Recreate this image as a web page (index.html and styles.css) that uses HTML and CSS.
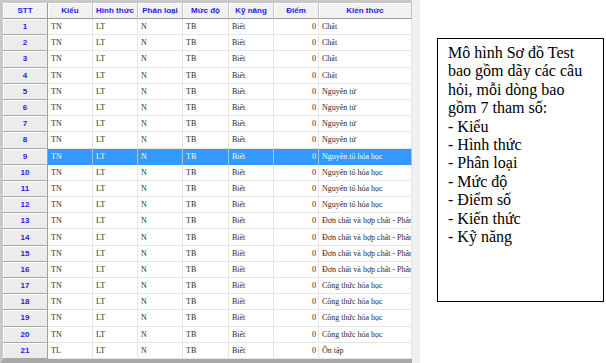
FILE: index.html
```html
<!DOCTYPE html>
<html lang="vi">
<head>
<meta charset="utf-8">
<title>Sơ đồ Test</title>
<link rel="stylesheet" href="styles.css">
</head>
<body>
<div class="page">
  <div class="grid-frame">
    <table class="grid">
      <colgroup>
        <col class="c-stt"><col class="c-n"><col class="c-n"><col class="c-n"><col class="c-md"><col class="c-n"><col class="c-n"><col class="c-kt">
      </colgroup>
      <thead>
        <tr>
          <th>STT</th><th>Kiểu</th><th>Hình thức</th><th>Phân loại</th><th>Mức độ</th><th>Kỹ năng</th><th>Điểm</th><th>Kiến thức</th>
        </tr>
      </thead>
      <tbody>
        <tr><th>1</th><td>TN</td><td>LT</td><td>N</td><td>TB</td><td>Biết</td><td class="num">0</td><td>Chất</td></tr>
        <tr><th>2</th><td>TN</td><td>LT</td><td>N</td><td>TB</td><td>Biết</td><td class="num">0</td><td>Chất</td></tr>
        <tr><th>3</th><td>TN</td><td>LT</td><td>N</td><td>TB</td><td>Biết</td><td class="num">0</td><td>Chất</td></tr>
        <tr><th>4</th><td>TN</td><td>LT</td><td>N</td><td>TB</td><td>Biết</td><td class="num">0</td><td>Chất</td></tr>
        <tr><th>5</th><td>TN</td><td>LT</td><td>N</td><td>TB</td><td>Biết</td><td class="num">0</td><td>Nguyên tử</td></tr>
        <tr><th>6</th><td>TN</td><td>LT</td><td>N</td><td>TB</td><td>Biết</td><td class="num">0</td><td>Nguyên tử</td></tr>
        <tr><th>7</th><td>TN</td><td>LT</td><td>N</td><td>TB</td><td>Biết</td><td class="num">0</td><td>Nguyên tử</td></tr>
        <tr><th>8</th><td>TN</td><td>LT</td><td>N</td><td>TB</td><td>Biết</td><td class="num">0</td><td>Nguyên tử</td></tr>
        <tr class="selected"><th>9</th><td>TN</td><td>LT</td><td class="focus">N</td><td>TB</td><td>Biết</td><td class="num">0</td><td>Nguyên tố hóa học</td></tr>
        <tr><th>10</th><td>TN</td><td>LT</td><td>N</td><td>TB</td><td>Biết</td><td class="num">0</td><td>Nguyên tố hóa học</td></tr>
        <tr><th>11</th><td>TN</td><td>LT</td><td>N</td><td>TB</td><td>Biết</td><td class="num">0</td><td>Nguyên tố hóa học</td></tr>
        <tr><th>12</th><td>TN</td><td>LT</td><td>N</td><td>TB</td><td>Biết</td><td class="num">0</td><td>Nguyên tố hóa học</td></tr>
        <tr><th>13</th><td>TN</td><td>LT</td><td>N</td><td>TB</td><td>Biết</td><td class="num">0</td><td>Đơn chất và hợp chất - Phân tử</td></tr>
        <tr><th>14</th><td>TN</td><td>LT</td><td>N</td><td>TB</td><td>Biết</td><td class="num">0</td><td>Đơn chất và hợp chất - Phân tử</td></tr>
        <tr><th>15</th><td>TN</td><td>LT</td><td>N</td><td>TB</td><td>Biết</td><td class="num">0</td><td>Đơn chất và hợp chất - Phân tử</td></tr>
        <tr><th>16</th><td>TN</td><td>LT</td><td>N</td><td>TB</td><td>Biết</td><td class="num">0</td><td>Đơn chất và hợp chất - Phân tử</td></tr>
        <tr><th>17</th><td>TN</td><td>LT</td><td>N</td><td>TB</td><td>Biết</td><td class="num">0</td><td>Công thức hóa học</td></tr>
        <tr><th>18</th><td>TN</td><td>LT</td><td>N</td><td>TB</td><td>Biết</td><td class="num">0</td><td>Công thức hóa học</td></tr>
        <tr><th>19</th><td>TN</td><td>LT</td><td>N</td><td>TB</td><td>Biết</td><td class="num">0</td><td>Công thức hóa học</td></tr>
        <tr><th>20</th><td>TN</td><td>LT</td><td>N</td><td>TB</td><td>Biết</td><td class="num">0</td><td>Công thức hóa học</td></tr>
        <tr><th>21</th><td>TL</td><td>LT</td><td>N</td><td>TB</td><td>Biết</td><td class="num">0</td><td>Ôn tập</td></tr>
      </tbody>
    </table>
  </div>
  <div class="strip"></div>
  <div class="note">
    Mô hình Sơ đồ Test<br>
    bao gồm dãy các câu<br>
    hỏi, mỗi dòng bao<br>
    gồm 7 tham số:<br>
    - Kiểu<br>
    - Hình thức<br>
    - Phân loại<br>
    - Mức độ<br>
    - Điểm số<br>
    - Kiến thức<br>
    - Kỹ năng
  </div>
</div>
</body>
</html>
```
FILE: styles.css
```css
* { box-sizing: border-box; }

html, body {
  margin: 0;
  padding: 0;
  background: #ffffff;
}

.page {
  display: flex;
  align-items: flex-start;
  width: 606px;
  height: 363px;
  overflow: hidden;
}

.grid-frame {
  width: 412px;
  height: 363px;
  flex: none;
  background: #ffffff;
  border-top: 3px solid #c8c8c8;
  border-left: 3px solid #c8c8c8;
  border-bottom: 4px solid #a8a8a8;
  box-shadow: inset 1px 1px 0 #9a9a9a;
  overflow: hidden;
}

.strip {
  width: 8px;
  height: 363px;
  flex: none;
  background: #f0f0f0;
}

.grid {
  table-layout: fixed;
  border-collapse: separate;
  border-spacing: 0;
  width: 409px;
}

.c-stt { width: 45px; }
.c-n { width: 45px; }
.c-md { width: 46px; }
.c-kt { width: 93px; }

.grid thead th {
  height: 16px;
  padding: 0 2px;
  background: #f1f1f1;
  border-right: 1px solid #c4c4c4;
  border-bottom: 1px solid #9c9c9c;
  box-shadow: inset 1px 1px 0 #ffffff;
  font-family: "Liberation Sans", Arial, sans-serif;
  font-weight: bold;
  font-size: 8px;
  color: #2323e6;
  text-align: center;
  white-space: nowrap;
  overflow: hidden;
}

.grid thead th:first-child {
  border-right-color: #9c9c9c;
}

.grid tbody tr {
  height: 16.19px;
}

.grid tbody th {
  padding: 0;
  background: #ececec;
  border-right: 1px solid #a0a0a0;
  border-bottom: 1px solid #a8a8a8;
  box-shadow: inset 1px 1px 0 #ffffff;
  font-family: "Liberation Sans", Arial, sans-serif;
  font-weight: bold;
  font-size: 8px;
  color: #1a1aee;
  text-align: center;
}

.grid td {
  padding: 0 3px;
  border-right: 1px solid #e6e6e6;
  border-bottom: 1px solid #e6e6e6;
  font-family: "Liberation Serif", "Times New Roman", serif;
  font-size: 8px;
  color: #2a2a2a;
  white-space: nowrap;
  overflow: hidden;
  text-overflow: clip;
}

.grid td.num {
  text-align: right;
  padding-right: 2px;
}

.grid td:last-child {
  padding-left: 3px;
}

.grid tr.selected td {
  background: #3399ff;
  color: #f4f8ff;
  border-right-color: #9cc6f2;
  border-bottom-color: #3399ff;
}

.grid tr.selected td.focus {
  box-shadow: inset 0 0 0 1px #7c8ea4;
}

.note {
  flex: none;
  width: 167px;
  height: 264px;
  margin-top: 38px;
  margin-left: 17px;
  border: 1px solid #000000;
  padding: 5px 0 0 10px;
  font-family: "Liberation Serif", "Times New Roman", serif;
  font-size: 16px;
  line-height: 18.4px;
  color: #000000;
}
```
